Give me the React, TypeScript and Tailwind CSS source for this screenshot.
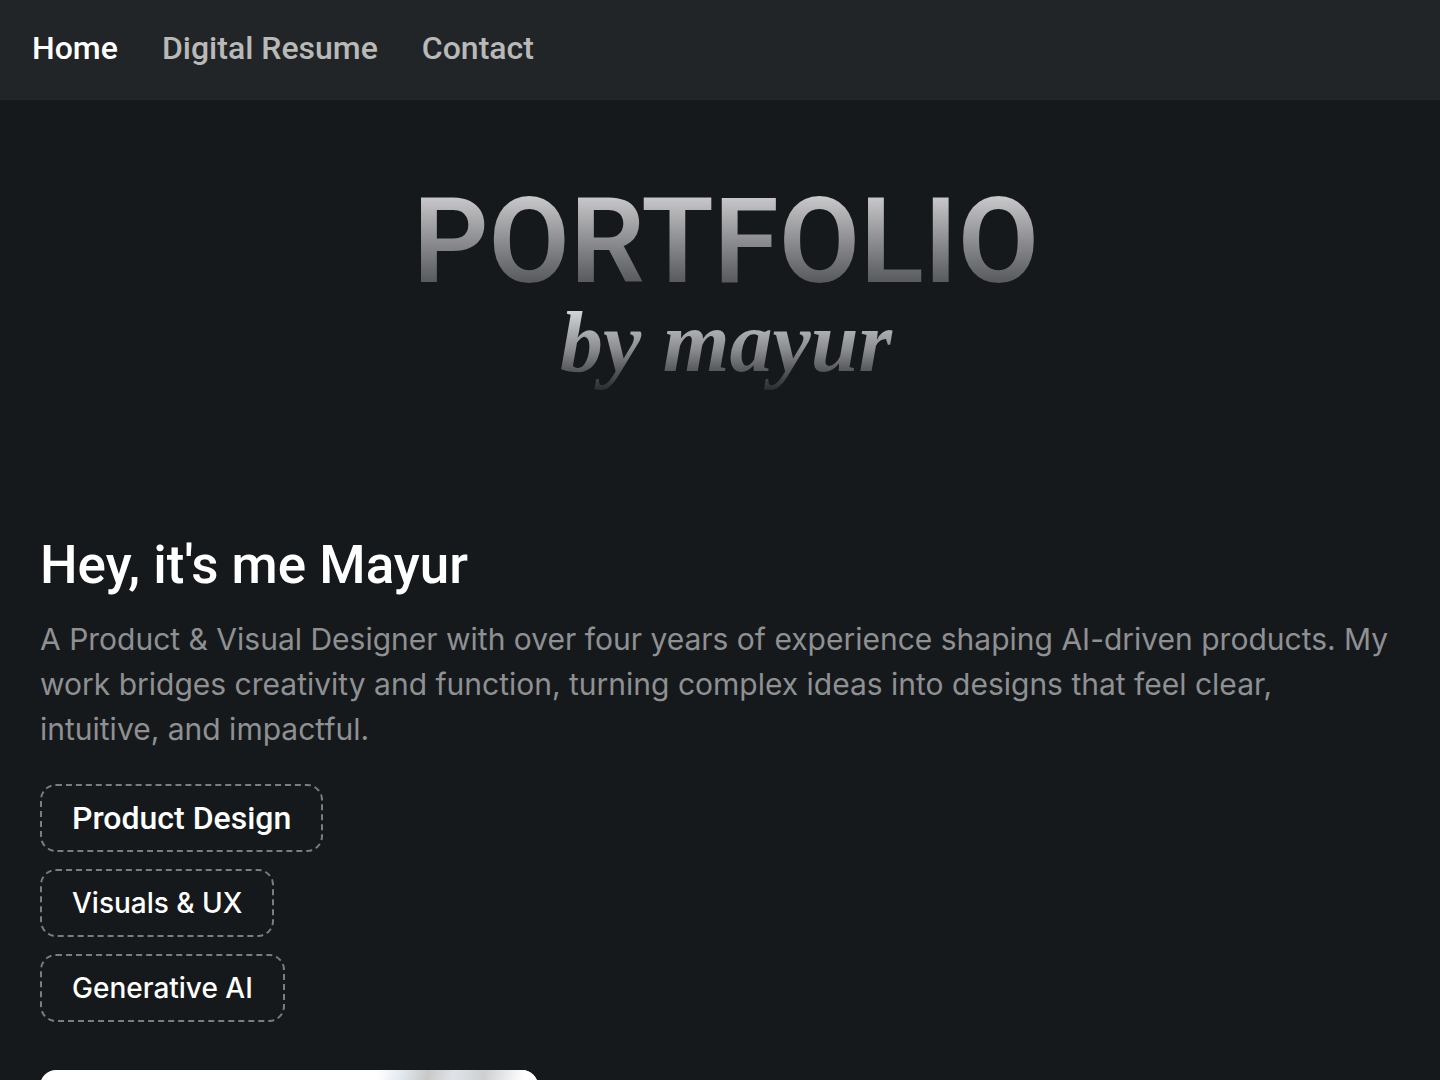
type NavItem = {
  name: string;
  href: string;
  active?: boolean;
};

const navData: NavItem[] = [
  { name: 'Home', href: '#home', active: true },
  { name: 'Digital Resume', href: '#resume' },
  { name: 'Contact', href: '#contact' },
];

const skills = [
  { name: 'Product Design', className: "font-['Roboto',sans-serif] text-[32px]" },
  { name: 'Visuals & UX', className: "font-['Inter',sans-serif] text-[28px]" },
  { name: 'Generative AI', className: "font-['Inter',sans-serif] text-[28px]" },
];

function Navbar() {
  return (
    <header className="border-b border-[#23282b] bg-[#212527] px-8 pt-6 pb-[27px]">
      <nav className="flex items-center gap-11 font-['Roboto',sans-serif] text-[32px] leading-[48px] font-medium">
        {navData.map((item) => (
          <a
            key={item.name}
            href={item.href}
            aria-current={item.active ? 'page' : undefined}
            className={item.active ? 'text-white' : 'text-[#b9b9b7] hover:text-white transition'}
          >
            {item.name}
          </a>
        ))}
      </nav>
    </header>
  );
}

function Hero() {
  return (
    <section className="flex flex-col items-center pt-[90px] pb-[138px] pl-3">
      <h1 className="flex flex-col items-center">
        <span className="bg-linear-to-b from-[#d2d2d5] to-[#4b4c4f] bg-clip-text font-['Roboto',sans-serif] text-[118px] leading-[104px] font-semibold text-transparent">
          PORTFOLIO
        </span>
        {/* fades out towards the descenders */}
        <span className="bg-linear-to-b from-[#e0e2e4] from-10% via-[#8a8c8f] via-55% to-[#202326] bg-clip-text px-2 pb-[5px] font-['Liberation_Serif',serif] text-[86px] leading-[96px] font-bold text-transparent italic">
          by mayur
        </span>
      </h1>
    </section>
  );
}

function Intro() {
  return (
    <section className="px-10">
      <h2 className="font-['Roboto',sans-serif] text-[53px] leading-[64px] font-medium text-white">
        Hey, it's me Mayur
      </h2>
      <p className="mt-5 pr-2 font-['Inter',sans-serif] text-[30px] leading-[45px] text-[#8f9092]">
        A Product &amp; Visual Designer with over four years of experience shaping AI-driven products. My
        work bridges creativity and function, turning complex ideas into designs that feel clear,
        intuitive, and impactful.
      </p>

      <ul className="mt-8 flex flex-col items-start gap-[17px]">
        {skills.map((skill) => (
          <li
            key={skill.name}
            className={`rounded-2xl border-2 border-dashed border-[#7b7d7f] px-[30px] py-3 leading-10 font-medium text-white ${skill.className}`}
          >
            {skill.name}
          </li>
        ))}
      </ul>
    </section>
  );
}

function ProjectCard() {
  return (
    <section className="px-10 pt-12 pb-10">
      <div className="flex h-80 w-full max-w-[498px] justify-end overflow-hidden rounded-2xl bg-white">
        <div className="h-10 w-40 bg-[linear-gradient(100deg,#ffffff_0%,#e3e9f1_14%,#c8c9c6_30%,#dfe3e9_46%,#cdcfd1_64%,#ffffff_88%)]" />
      </div>
    </section>
  );
}

export default function App() {
  return (
    <div className="min-h-screen bg-[#16191c]">
      <Navbar />
      <main>
        <Hero />
        <Intro />
        <ProjectCard />
      </main>
    </div>
  );
}
